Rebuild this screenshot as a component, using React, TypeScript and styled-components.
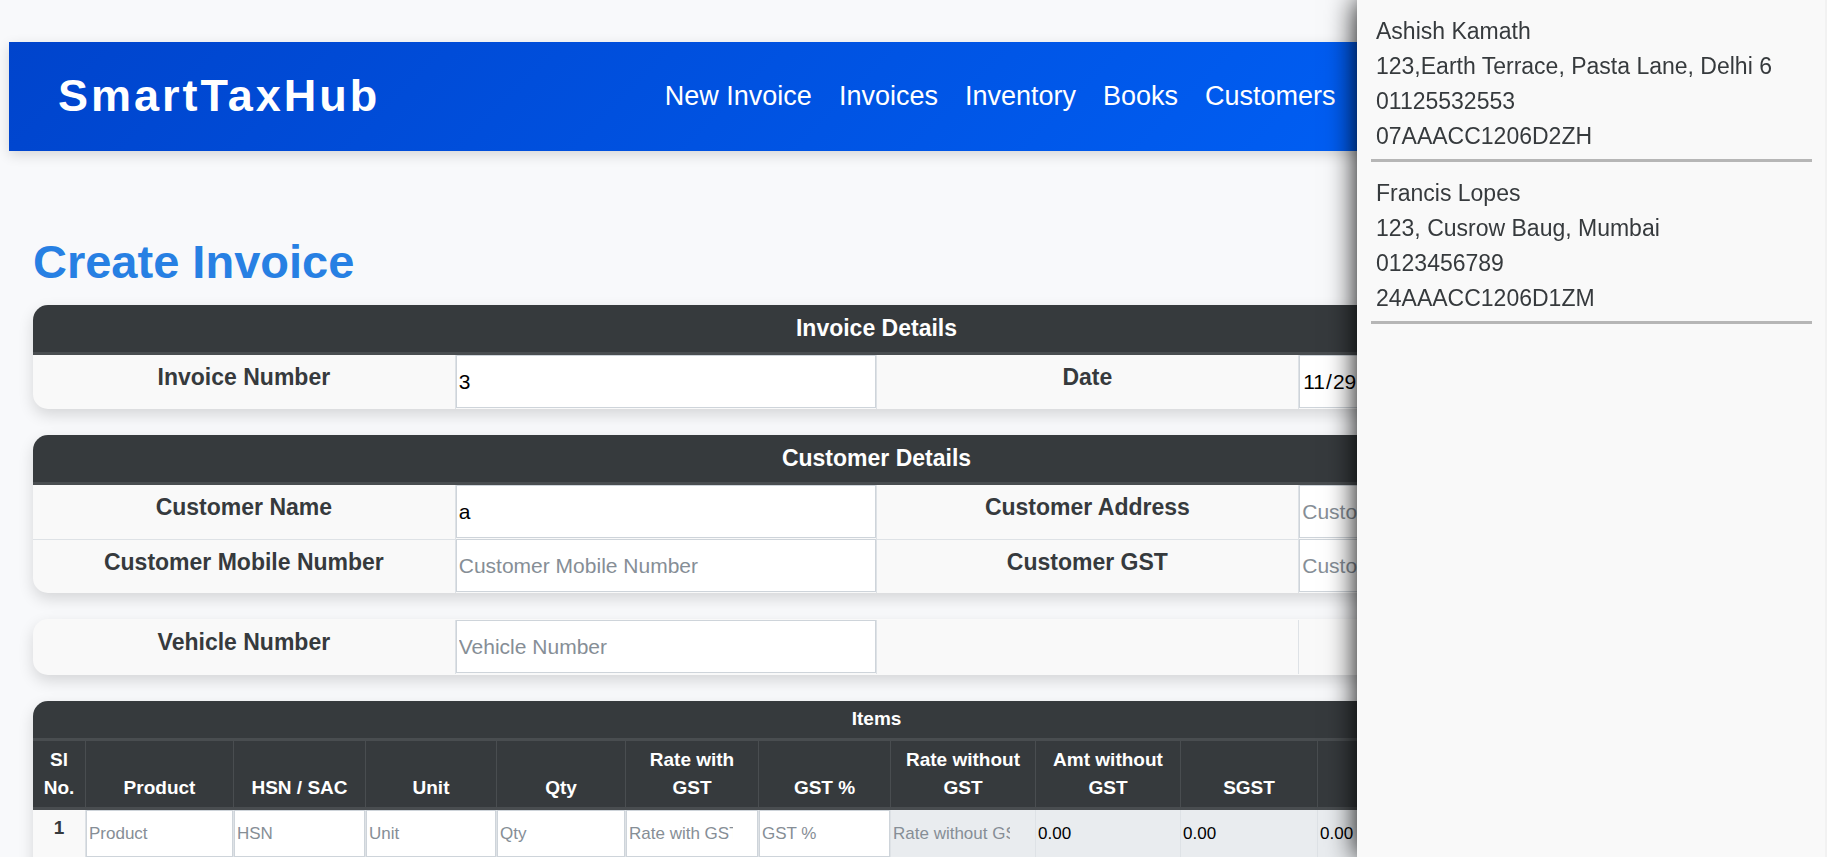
import React from 'react';
import styled, { createGlobalStyle } from 'styled-components';

const GlobalStyle = createGlobalStyle`
  * { box-sizing: border-box; }
  body {
    margin: 0;
    background: #f8f9fb;
    color: #363a3d;
    font-family: "Liberation Sans", Arial, sans-serif;
    font-size: 23px;
    line-height: 35px;
    overflow: hidden;
  }
`;

const Page = styled.div`
  height: 100vh;
  overflow: hidden;
`;

const Header = styled.header`
  display: grid;
  grid-template-columns: 6fr 11fr;
  column-gap: 4px;
  align-items: center;
  height: 109px;
  margin: 42px 9px 0;
  padding: 0 48px 0 49px;
  background: linear-gradient(135deg, #0044cc, #0066ff);
  box-shadow: 0 4px 12px rgba(0, 0, 0, 0.14);
`;

const Brand = styled.div`
  padding-bottom: 2px;
  color: #fff;
  font-size: 45px;
  font-weight: 700;
  letter-spacing: 3px;
`;

const Nav = styled.nav`
  display: flex;
  gap: 27px;
  white-space: nowrap;
`;

const NavLink = styled.a`
  color: #fff;
  font-size: 27px;
  text-decoration: none;
`;

const Main = styled.main`
  display: flex;
  flex-direction: column;
  gap: 26px;
  padding: 93px 107px 0 33px;
`;

const Title = styled.h1`
  margin: 0;
  color: #2780e3;
  font-size: 47px;
  line-height: 35px;
  font-weight: 700;
`;

const Card = styled.div<{ $inset?: boolean }>`
  overflow: hidden;
  flex-shrink: 0;
  padding: ${p => (p.$inset ? '1px 0' : '0')};
  border-radius: 15px;
  background: #f9f9f9;
  box-shadow: 0 6px 15px rgba(0, 0, 0, 0.14);
`;

const Table = styled.table`
  width: 100%;
  table-layout: fixed;
  border-collapse: separate;
  border-spacing: 0;
`;

const Caption = styled.th<{ $compact?: boolean }>`
  height: ${p => (p.$compact ? 40 : 50)}px;
  padding: 0 0 2px;
  border-bottom: 3px solid #494d50;
  background: #363a3d;
  color: #fff;
  font-size: ${p => (p.$compact ? 19 : 23)}px;
  line-height: 28px;
`;

const LabelCell = styled.th`
  padding: 5px 0 0;
  font-size: 23px;
  font-weight: 700;
  line-height: 35px;
  vertical-align: top;
  tr + tr > & { border-top: 1px solid #dee2e6; }
`;

const FieldCell = styled.td<{ $lined?: boolean }>`
  height: 54px;
  padding: 0 0 1px;
  border-left: 1px solid #dee2e6;
  border-right: ${p => (p.$lined ? '0' : '1px')} solid #dee2e6;
`;

const BlankCell = styled.td``;

const Field = styled.input`
  display: block;
  width: 100%;
  height: 53px;
  padding: 0 2px;
  border: 1px solid #ced4da;
  border-radius: 0;
  outline: 0;
  background: #fff;
  color: #000;
  font: 21px "Liberation Sans", Arial, sans-serif;
  &::placeholder { color: #868e96; opacity: 1; }
`;

const ColumnHead = styled.th`
  height: 69px;
  padding: 5px 4px;
  border-bottom: 3px solid #494d50;
  background: #363a3d;
  color: #fff;
  font-size: 19px;
  line-height: 28px;
  vertical-align: bottom;
  & + & { border-left: 1px solid #494d50; }
`;

const RowNumber = styled.th`
  padding: 4px 0 0;
  font-size: 19px;
  line-height: 28px;
  vertical-align: top;
`;

const ItemCell = styled.td`
  padding: 0 0 1px;
  border-left: 1px solid #dee2e6;
`;

const ItemField = styled(Field)`
  height: 47px;
  padding: 0 24px 0 2px;
  font-size: 17px;
  &:read-only {
    padding-left: 1px;
    border-color: #e9ecef;
    background: #e9ecef;
  }
`;

const TableFoot = styled.td`
  height: 48px;
  border-top: 1px solid #dee2e6;
`;

const Drawer = styled.aside`
  position: fixed;
  top: 0;
  right: 0;
  bottom: 0;
  width: 470px;
  padding: 14px 13px 0 14px;
  border-right: 2px solid #f2f2f2;
  background: #f9f9f9;
  box-shadow: 0 0 28px #000;
`;

const Contact = styled.address`
  padding: 0 5px 5px;
  margin-bottom: 14px;
  border-bottom: 3px solid #b6b6b6;
  font-style: normal;
`;

const NAV = ['New Invoice', 'Invoices', 'Inventory', 'Books', 'Customers'];

const COLUMNS = [
  { head: 'Sl No.', width: 52 },
  { head: 'Product', width: 148, hint: 'Product' },
  { head: 'HSN / SAC', width: 132, hint: 'HSN' },
  { head: 'Unit', width: 131, hint: 'Unit' },
  { head: 'Qty', width: 129, hint: 'Qty' },
  { head: 'Rate with GST', width: 133, hint: 'Rate with GST' },
  { head: 'GST %', width: 132, hint: 'GST %' },
  { head: 'Rate without GST', width: 145, hint: 'Rate without GST', locked: true },
  { head: 'Amt without GST', width: 145, value: '0.00', locked: true },
  { head: 'SGST', width: 137, value: '0.00', locked: true },
  { head: 'CGST', width: 137, value: '0.00', locked: true },
  { head: 'IGST', width: 133, value: '0.00', locked: true },
  { head: 'Amount', width: 133, value: '0.00', locked: true },
];

const CONTACTS = [
  ['Ashish Kamath', '123,Earth Terrace, Pasta Lane, Delhi 6', '01125532553', '07AAACC1206D2ZH'],
  ['Francis Lopes', '123, Cusrow Baug, Mumbai', '0123456789', '24AAACC1206D1ZM'],
];

type EntryProps = { id: string; label: string; value?: string; hint?: boolean; type?: string };

function Entry({ id, label, value, hint, type = 'text' }: EntryProps) {
  return (
    <>
      <LabelCell scope="row"><label htmlFor={id}>{label}</label></LabelCell>
      <FieldCell>
        <Field id={id} type={type} defaultValue={value} placeholder={hint ? label : undefined} />
      </FieldCell>
    </>
  );
}

export default function App() {
  return (
    <Page>
      <GlobalStyle />
      <Header>
        <Brand>SmartTaxHub</Brand>
        <Nav>{NAV.map(n => <NavLink key={n} href="#">{n}</NavLink>)}</Nav>
      </Header>
      <Main>
        <Title>Create Invoice</Title>
        <Card>
          <Table>
            <thead><tr><Caption colSpan={4}>Invoice Details</Caption></tr></thead>
            <tbody>
              <tr>
                <Entry id="number" label="Invoice Number" value="3" />
                <Entry id="date" label="Date" type="date" value="2023-11-29" />
              </tr>
            </tbody>
          </Table>
        </Card>
        <Card>
          <Table>
            <thead><tr><Caption colSpan={4}>Customer Details</Caption></tr></thead>
            <tbody>
              <tr>
                <Entry id="name" label="Customer Name" value="a" />
                <Entry id="address" label="Customer Address" hint />
              </tr>
              <tr>
                <Entry id="mobile" label="Customer Mobile Number" hint />
                <Entry id="gst" label="Customer GST" hint />
              </tr>
            </tbody>
          </Table>
        </Card>
        <Card $inset>
          <Table>
            <tbody>
              <tr>
                <Entry id="vehicle" label="Vehicle Number" hint />
                <BlankCell />
                <FieldCell $lined />
              </tr>
            </tbody>
          </Table>
        </Card>
        <Card>
          <Table>
            <colgroup>{COLUMNS.map(c => <col key={c.head} width={c.width} />)}</colgroup>
            <thead>
              <tr><Caption $compact colSpan={COLUMNS.length}>Items</Caption></tr>
              <tr>{COLUMNS.map(c => <ColumnHead key={c.head} scope="col">{c.head}</ColumnHead>)}</tr>
            </thead>
            <tbody>
              <tr>
                <RowNumber scope="row">1</RowNumber>
                {COLUMNS.slice(1).map(c => (
                  <ItemCell key={c.head}>
                    <ItemField aria-label={c.head} placeholder={c.hint} defaultValue={c.value} readOnly={c.locked} />
                  </ItemCell>
                ))}
              </tr>
            </tbody>
            <tfoot><tr><TableFoot colSpan={COLUMNS.length} /></tr></tfoot>
          </Table>
        </Card>
      </Main>
      <Drawer>
        {CONTACTS.map(lines => (
          <Contact key={lines[0]}>{lines.map(l => <div key={l}>{l}</div>)}</Contact>
        ))}
      </Drawer>
    </Page>
  );
}
